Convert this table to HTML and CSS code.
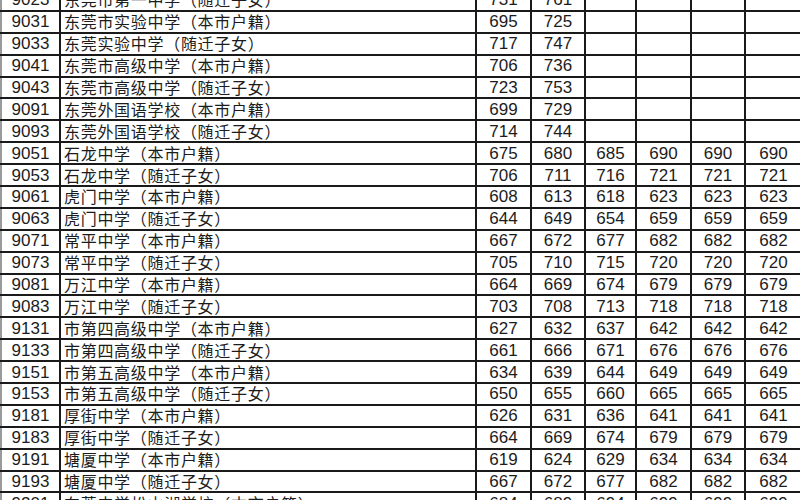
FILE: index.html
```html
<!DOCTYPE html>
<html lang="zh-CN">
<head>
<meta charset="utf-8">
<title>东莞中考录取分数线</title>
<link rel="stylesheet" href="styles.css">
</head>
<body>
<div class="sheet">
<table class="scores">
<colgroup>
<col class="c-code"><col class="c-name"><col class="c-s1"><col class="c-s2"><col class="c-s3"><col class="c-s4"><col class="c-s5"><col class="c-s6">
</colgroup>
<tbody>
<tr><td class="code">9023</td><td class="name">东莞市第一中学（随迁子女）</td><td>731</td><td>761</td><td></td><td></td><td></td><td></td></tr>
<tr><td class="code">9031</td><td class="name">东莞市实验中学（本市户籍）</td><td>695</td><td>725</td><td></td><td></td><td></td><td></td></tr>
<tr><td class="code">9033</td><td class="name">东莞实验中学（随迁子女）</td><td>717</td><td>747</td><td></td><td></td><td></td><td></td></tr>
<tr><td class="code">9041</td><td class="name">东莞市高级中学（本市户籍）</td><td>706</td><td>736</td><td></td><td></td><td></td><td></td></tr>
<tr><td class="code">9043</td><td class="name">东莞市高级中学（随迁子女）</td><td>723</td><td>753</td><td></td><td></td><td></td><td></td></tr>
<tr><td class="code">9091</td><td class="name">东莞外国语学校（本市户籍）</td><td>699</td><td>729</td><td></td><td></td><td></td><td></td></tr>
<tr><td class="code">9093</td><td class="name">东莞外国语学校（随迁子女）</td><td>714</td><td>744</td><td></td><td></td><td></td><td></td></tr>
<tr><td class="code">9051</td><td class="name">石龙中学（本市户籍）</td><td>675</td><td>680</td><td>685</td><td>690</td><td>690</td><td>690</td></tr>
<tr><td class="code">9053</td><td class="name">石龙中学（随迁子女）</td><td>706</td><td>711</td><td>716</td><td>721</td><td>721</td><td>721</td></tr>
<tr><td class="code">9061</td><td class="name">虎门中学（本市户籍）</td><td>608</td><td>613</td><td>618</td><td>623</td><td>623</td><td>623</td></tr>
<tr><td class="code">9063</td><td class="name">虎门中学（随迁子女）</td><td>644</td><td>649</td><td>654</td><td>659</td><td>659</td><td>659</td></tr>
<tr><td class="code">9071</td><td class="name">常平中学（本市户籍）</td><td>667</td><td>672</td><td>677</td><td>682</td><td>682</td><td>682</td></tr>
<tr><td class="code">9073</td><td class="name">常平中学（随迁子女）</td><td>705</td><td>710</td><td>715</td><td>720</td><td>720</td><td>720</td></tr>
<tr><td class="code">9081</td><td class="name">万江中学（本市户籍）</td><td>664</td><td>669</td><td>674</td><td>679</td><td>679</td><td>679</td></tr>
<tr><td class="code">9083</td><td class="name">万江中学（随迁子女）</td><td>703</td><td>708</td><td>713</td><td>718</td><td>718</td><td>718</td></tr>
<tr><td class="code">9131</td><td class="name">市第四高级中学（本市户籍）</td><td>627</td><td>632</td><td>637</td><td>642</td><td>642</td><td>642</td></tr>
<tr><td class="code">9133</td><td class="name">市第四高级中学（随迁子女）</td><td>661</td><td>666</td><td>671</td><td>676</td><td>676</td><td>676</td></tr>
<tr><td class="code">9151</td><td class="name">市第五高级中学（本市户籍）</td><td>634</td><td>639</td><td>644</td><td>649</td><td>649</td><td>649</td></tr>
<tr><td class="code">9153</td><td class="name">市第五高级中学（随迁子女）</td><td>650</td><td>655</td><td>660</td><td>665</td><td>665</td><td>665</td></tr>
<tr><td class="code">9181</td><td class="name">厚街中学（本市户籍）</td><td>626</td><td>631</td><td>636</td><td>641</td><td>641</td><td>641</td></tr>
<tr><td class="code">9183</td><td class="name">厚街中学（随迁子女）</td><td>664</td><td>669</td><td>674</td><td>679</td><td>679</td><td>679</td></tr>
<tr><td class="code">9191</td><td class="name">塘厦中学（本市户籍）</td><td>619</td><td>624</td><td>629</td><td>634</td><td>634</td><td>634</td></tr>
<tr><td class="code">9193</td><td class="name">塘厦中学（随迁子女）</td><td>667</td><td>672</td><td>677</td><td>682</td><td>682</td><td>682</td></tr>
<tr><td class="code">9201</td><td class="name">东莞中学松山湖学校（本市户籍）</td><td>684</td><td>689</td><td>694</td><td>699</td><td>699</td><td>699</td></tr>
</tbody>
</table>
</div>
</body>
</html>
```

FILE: styles.css
```css
html, body {
  margin: 0;
  padding: 0;
  background: #ffffff;
}

.sheet {
  width: 800px;
  height: 500px;
  overflow: hidden;
}

.scores {
  border-collapse: collapse;
  table-layout: fixed;
  width: 801px;
  margin-top: -12px;
  color: #1c1c1c;
  font-family: "Liberation Sans", Arial, "Noto Sans CJK SC", sans-serif;
  font-size: 17px;
}

.c-code { width: 59px; }
.c-name { width: 416px; }
.c-s1 { width: 55px; }
.c-s2 { width: 54px; }
.c-s3 { width: 51px; }
.c-s4 { width: 55px; }
.c-s5 { width: 54px; }
.c-s6 { width: 57px; }

.scores tr {
  height: 21.9px;
}

.scores td {
  border: 2px solid #1a1a1a;
  padding: 0;
  height: 19.9px;
  line-height: 19px;
  text-align: center;
  white-space: nowrap;
  overflow: hidden;
}

.scores td.code {
  border-left: 2px solid #9a9a9a;
}

.scores td.name {
  text-align: left;
  padding-left: 3px;
  font-family: "Noto Sans CJK SC", sans-serif;
  font-size: 16px;
  letter-spacing: 0.7px;
}
```
